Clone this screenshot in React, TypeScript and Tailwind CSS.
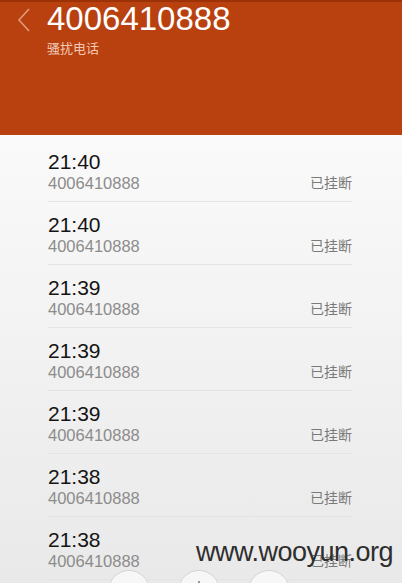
const calls = [
  { time: "21:40" },
  { time: "21:40" },
  { time: "21:39" },
  { time: "21:39" },
  { time: "21:39" },
  { time: "21:38" },
  { time: "21:38" },
];

export default function App() {
  return (
    <div
      className="relative h-[583px] w-[402px] overflow-hidden bg-gradient-to-b from-white to-[#e9e9e9]"
      style={{ fontFamily: '"Liberation Sans", "Noto Sans CJK SC", sans-serif' }}
    >
      {/* Header */}
      <header className="h-[135px] border-t-2 border-[#9c3206] bg-[#b9410f]">
        <div className="flex">
          <div className="w-[47px] pl-[16px] pt-[5px]">
            <svg width="16" height="26" viewBox="0 0 16 26" fill="none">
              <path d="M13 2 L3 13 L13 24" stroke="#e39a78" strokeWidth="1.6" />
            </svg>
          </div>
          <div>
            <div className="text-[33px] leading-[34px] text-white">4006410888</div>
            <div className="mt-[5px] text-[13px] leading-[16px] text-[#f2c9b6]">骚扰电话</div>
          </div>
        </div>
      </header>

      {/* Call list */}
      <ul className="px-[48px] pt-[4px] pr-[50px]">
        {calls.map((c, i) => (
          <li key={i} className="border-b border-[#e4e4e4] pt-[11px] pb-[8px]">
            <div className="text-[21px] leading-[24px] text-[#141414]">{c.time}</div>
            <div className="flex items-center justify-between leading-[19px]">
              <span className="text-[16.5px] text-[#8c8c8c]">4006410888</span>
              <span className="text-[14px] text-[#7a7a7a]">已挂断</span>
            </div>
          </li>
        ))}
      </ul>

      {/* Floating buttons */}
      <div className="absolute left-[108px] top-[570px] flex gap-[28px]">
        <div className="h-[42px] w-[42px] rounded-full border border-[#d4d4d4] bg-[#f7f7f7]" />
        <div className="flex h-[42px] w-[42px] justify-center rounded-full border border-[#d4d4d4] bg-[#f7f7f7] pt-[10px]">
          <div className="h-[4px] w-[2px] bg-[#9a9a9a]" />
        </div>
        <div className="h-[42px] w-[42px] rounded-full border border-[#d4d4d4] bg-[#f7f7f7]" />
      </div>

      {/* Watermark */}
      <div className="absolute right-[9px] top-[539px] text-[27px] leading-[27px] tracking-[-0.5px] text-[#2e2e2e]">
        www.wooyun.org
      </div>
    </div>
  );
}
